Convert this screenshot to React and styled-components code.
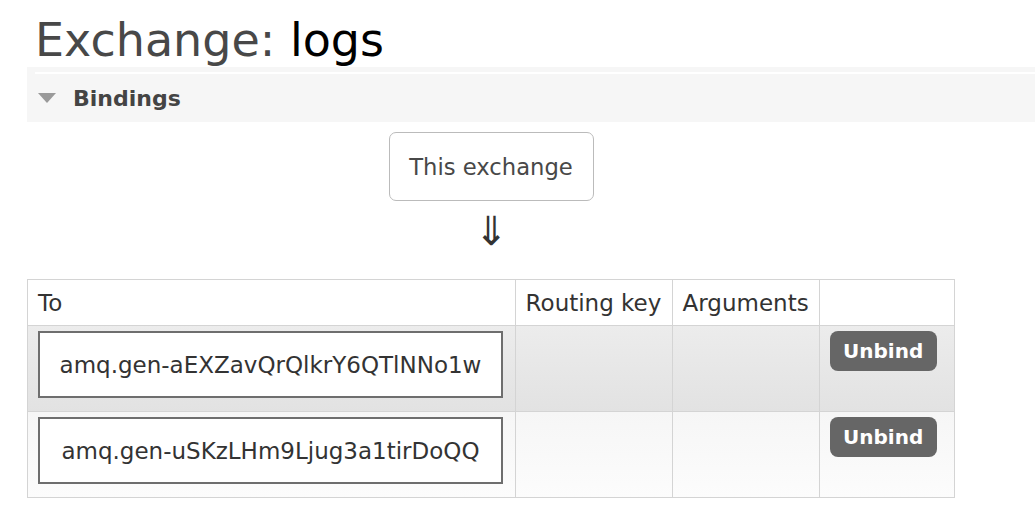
import React from 'react';
import styled, { createGlobalStyle } from 'styled-components';

const GlobalStyle = createGlobalStyle`
	body {
		margin: 0;
		background: #fff;
		font-family: "DejaVu Sans", Verdana, sans-serif;
		color: #484848;
	}
`;

const Page = styled.div`
	width: 1035px;
	height: 520px;
	overflow: hidden;
	padding-left: 27px;
	box-sizing: border-box;
`;

const Title = styled.h1`
	margin: 0;
	padding: 13px 0 0 8px;
	height: 67px;
	box-sizing: border-box;
	font-size: 46px;
	font-weight: normal;
	line-height: 54px;
	color: #484848;
	white-space: nowrap;
`;

const Name = styled.span`
	color: #000;
`;

const Section = styled.div`
	background: #f6f6f6;
	height: 55px;
	padding-top: 5px;
	box-sizing: border-box;
	margin-right: -2px;
`;

const Rule = styled.div`
	height: 2px;
	margin-left: 8px;
	background: #fff;
`;

const SectionHead = styled.div`
	display: flex;
	align-items: center;
	gap: 17px;
	height: 48px;
	padding-left: 11px;
	font-size: 22px;
	font-weight: bold;
	color: #444;
`;

const Triangle = styled.span`
	width: 0;
	height: 0;
	border-left: 9px solid transparent;
	border-right: 9px solid transparent;
	border-top: 10px solid #9a9a9a;
`;

const Diagram = styled.div`
	width: 928px;
	display: flex;
	flex-direction: column;
	align-items: center;
	padding-top: 10px;
`;

const Source = styled.div`
	width: 205px;
	height: 69px;
	box-sizing: border-box;
	border: 1px solid #bbb;
	border-radius: 7px;
	display: flex;
	align-items: center;
	justify-content: center;
	font-size: 22.7px;
	color: #484848;
`;

const Arrow = styled.div`
	height: 78px;
	font-size: 40px;
	line-height: 60px;
	color: #333;
`;

const Table = styled.table`
	width: 928px;
	border-collapse: collapse;
	font-size: 23px;
	color: #333;
`;

const HeadCell = styled.th`
	height: 46px;
	padding: 0 10px;
	text-align: left;
	font-weight: normal;
	border: 1px solid #d4d4d4;
	background: #fff;
	width: ${p => p.$w}px;
	box-sizing: border-box;
	white-space: nowrap;
`;

const Row = styled.tr`
	background: ${p =>
		p.$alt
			? 'linear-gradient(#f6f6f6, #fcfcfc)'
			: 'linear-gradient(#ececec, #e2e2e2)'};
`;

const Cell = styled.td`
	height: 86px;
	padding: 5px 10px 0;
	vertical-align: top;
	border: 1px solid #d4d4d4;
	box-sizing: border-box;
`;

const QueueBox = styled.div`
	width: 465px;
	height: 67px;
	box-sizing: border-box;
	border: 2px solid #6e6e6e;
	background: #fff;
	display: flex;
	align-items: center;
	justify-content: center;
	font-size: 23px;
	color: #333;
	white-space: nowrap;
`;

const UnbindButton = styled.button`
	width: 107px;
	height: 40px;
	border: none;
	border-radius: 8px;
	background: #666;
	color: #fff;
	font-family: inherit;
	font-size: 20px;
	font-weight: bold;
	padding: 0;
	cursor: pointer;
`;

const bindings = [
	'amq.gen-aEXZavQrQlkrY6QTlNNo1w',
	'amq.gen-uSKzLHm9Ljug3a1tirDoQQ',
];

const App = () => (
	<>
		<GlobalStyle />
		<Page>
			<Title>
				Exchange: <Name>logs</Name>
			</Title>
			<Section>
				<Rule />
				<SectionHead>
					<Triangle />
					Bindings
				</SectionHead>
			</Section>
			<Diagram>
				<Source>This exchange</Source>
				<Arrow>⇓</Arrow>
			</Diagram>
			<Table>
				<thead>
					<tr>
						<HeadCell $w={488}>To</HeadCell>
						<HeadCell $w={157}>Routing key</HeadCell>
						<HeadCell $w={146}>Arguments</HeadCell>
						<HeadCell $w={137} />
					</tr>
				</thead>
				<tbody>
					{bindings.map((name, i) => (
						<Row key={name} $alt={i % 2 === 1}>
							<Cell>
								<QueueBox>{name}</QueueBox>
							</Cell>
							<Cell />
							<Cell />
							<Cell>
								<UnbindButton>Unbind</UnbindButton>
							</Cell>
						</Row>
					))}
				</tbody>
			</Table>
		</Page>
	</>
);

export default App;
